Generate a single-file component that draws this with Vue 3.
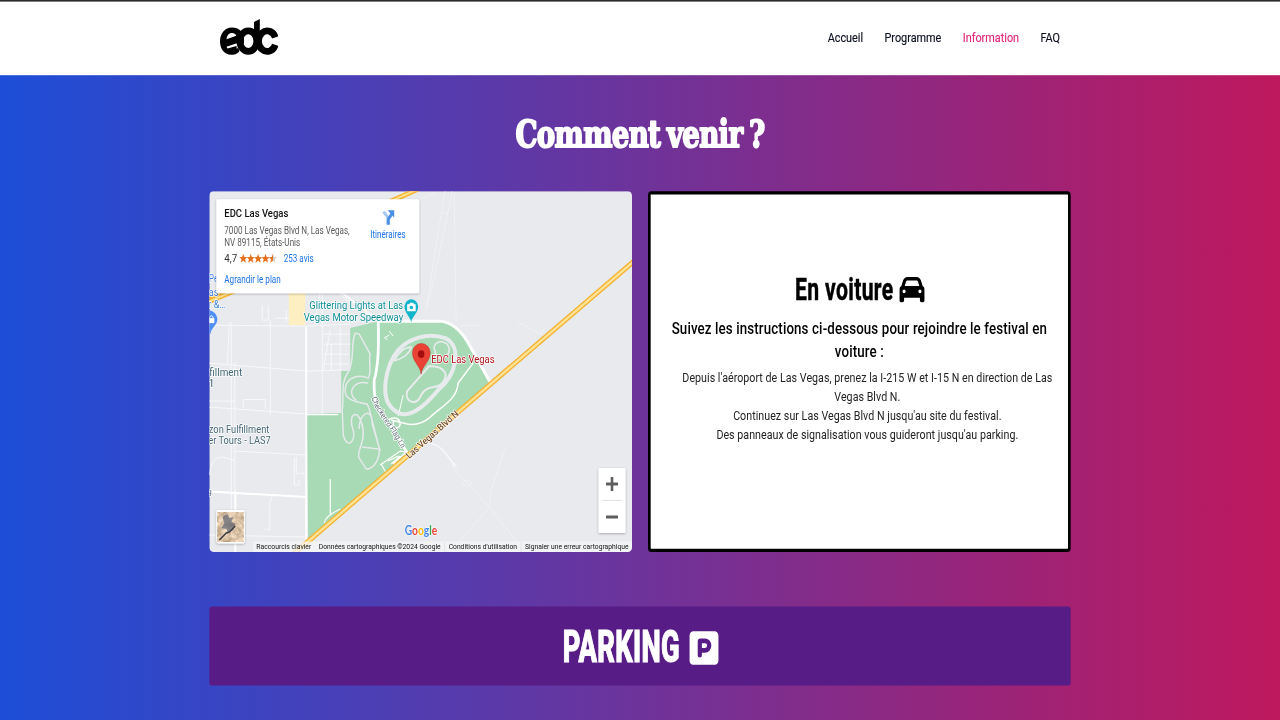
<script setup>
const links = [
  { label: 'Accueil' },
  { label: 'Programme' },
  { label: 'Information', active: true },
  { label: 'FAQ' },
]
const steps = [
  "Depuis l'aéroport de Las Vegas, prenez la I-215 W et I-15 N en direction de Las Vegas Blvd N.",
  "Continuez sur Las Vegas Blvd N jusqu'au site du festival.",
  "Des panneaux de signalisation vous guideront jusqu'au parking.",
]
const stars = [0, 1, 2, 3, 4].map((i) => 243 + i * 7.4)
const starShape = 'M0 -4.7L1.1 -1.5L4 -1.4L1.8 .7L2.6 4.100L0 2.2L-2.6 4.100L-1.8 .7L-4 -1.4L-1.1 -1.5Z'
</script>

<template>
  <div class="viewport">
    <div class="page">
      <header class="bar">
        <div class="bar-inner">
          <svg class="logo" viewBox="220 18 58 38" preserveAspectRatio="none" fill="none">
            <path d="M232 27C239 27 243 31 244 38V43L238 47L239.500 50.500C237 54 234 54.300 231 54.300C224 54 220 48 220 41C220 33 225 27 232 27Z" fill="#000" />
            <path d="M226.500 38.800C227 34 230 32.500 232 32.600C234.500 32.700 236 34.200 236.200 35.300Z" fill="#fff" />
            <path d="M226.500 46.300L237.500 42.600L238 47L236.800 48.500L236.500 45.500L227.500 48Z" fill="#fff" />
            <g stroke="#000" stroke-width="6.700">
              <ellipse cx="248.300" cy="40.700" rx="8.500" ry="10.300" />
              <path d="M275.300 37A8.700 10.300 0 1 0 275.300 44.500" />
            </g>
            <path d="M254 21.600L259.800 18.500V43H254Z" fill="#000" />
          </svg>
          <nav class="nav">
            <a v-for="l in links" :key="l.label" :class="{ active: l.active }">{{ l.label }}</a>
          </nav>
        </div>
      </header>

      <main class="content">
        <h1 class="title">
          <svg viewBox="0 0 260 50" preserveAspectRatio="none">
            <text x="5.500" y="37.500" textLength="249" lengthAdjust="spacingAndGlyphs">Comment venir ?</text>
          </svg>
        </h1>

        <section class="columns">
          <svg class="map" viewBox="209 191 423 361" preserveAspectRatio="none" fill="none">
            <defs>
              <filter id="soft" x="-20%" y="-20%" width="140%" height="150%">
                <feDropShadow dx="0" dy="0.800" stdDeviation="1" flood-opacity="0.300" />
              </filter>
              <filter id="thumb" x="0" y="0" width="100%" height="100%">
                <feTurbulence type="fractalNoise" baseFrequency="0.180" numOctaves="3" seed="8" />
                <feColorMatrix values="1.300 0 0 0 .08  1.200 0 0 0 .02  1.100 0 0 0 -.08  0 0 0 0 1" />
              </filter>
              <linearGradient id="half"><stop offset=".5" stop-color="#e7711b" /><stop offset=".5" stop-color="#cfcfcf" /></linearGradient>
            </defs>
            <rect x="209" y="191" width="423" height="361" fill="#e8eaed" />
            <rect x="288.500" y="285" width="16.500" height="40" fill="#feefc3" />
            <path d="M350 328L378 321H440C452 322 460 330 467 341L491 384L308 542L306.500 414L341 413V371H350Z" fill="#a8dab5" />

            <g stroke="#f7f8f9" stroke-width="1">
              <path d="M209 325L306 326M306 326L350 324M231 322V540M229 322L227 365M209 363L306 371L341 370M234.500 362V491M270 320V415M209 407L306 414M209 401H235M234 451L306 455M209 475Q211 456 222 457L234 460M209 491L306 497M272 496Q268 504 269.500 510V530L264 529M209 535L306 537M243 400V408M243 399.500H265V409M296 457V474L304 473M294 457V485H299V480" />
              <path d="M322 292V414M330 330L323 370M340 327V370M324 344H350M323 354H349M323 364H349M322 334H350M331 344V370M320 292L314 325M262 305V320H268V305M286 310V322M275 318H289M337 292L353 304" />
            </g>
            <g stroke="#f2f3f5" stroke-width=".8">
              <path d="M445 191C438 230 432 272 426 310M452 191C444 230 433 285 427 306M454 193L456 322M460 325.500H481M517 326L521 323L539 334L546 328M420 199L436 192M442 212L447 213" />
              <path d="M453 468L464 480L490 508L516 541M489 508L459 541M490 508V494L505 447" />
              <ellipse cx="467" cy="483" rx="4" ry="3" />
            </g>
            <path d="M430 443C440 445 445 452 454 465" stroke="#f9fafb" stroke-width="1.300" />
            <circle cx="454.500" cy="465.500" r="1.500" stroke="#f9fafb" />
            <g stroke="#fff" stroke-width="2">
              <path d="M306 326V552M209 491.500L306 497M235 491V552M341 292L354 302Q370 314 379 321" />
              <path d="M378 321C379 350 378 367 374 380C373 401 377 407 388 422Q399 437 407 453" stroke-width="2.800" />
              <path d="M378 321H440C452 322 460 330 467 341L491 384" stroke-width="3" />
              <path d="M473 363L458 383C457 399 442 406 430 417Q420 426 407 424L391 420M386 424C389 415 401 417 400 424C399 431 390 427 394 420" stroke-width="1.500" />
              <path d="M306 414.500H338M330 479V516M324 523Q325 516 340 509M380 465L400 451L406 452L393 464M381 464L386 473M388 461L398 456M391 464L400 456" stroke-width="1.200" />
              <path d="M385 337L387 340M384 338L389 335M389 331L393 336M403 395L398 416" stroke-width="1" />
            </g>
            <g stroke="#e6e9ec" stroke-width="1.500">
              <path d="M355 333C350 344 355 360 348 372C340 382 344 397 342 410L343 435C347 450 356 441 353 430C347 415 357 408 361 422C368 440 355 452 359 458L366 469C374 469 380 458 379 448L369 409L367 404C357 402 343 400 345 389C346 376 360 374 368 378C372 372 368 362 370 354L359 334ZM368 383C353 380 346 393 356 400M362 447L378 449M359 429C358 414 372 405 372 424L380 451" />
            </g>
            <g stroke="#e8ebed">
              <path d="M398 350C409 338 428 332 445 338C462 346 457 374 438 390C425 406 407 422 394 410C378 398 386 365 398 350Z" stroke-width="4" />
              <path d="M394 366C399 353 412 341 430 338" stroke="#a8dab5" stroke-width="1" />
              <path d="M407 391L429 366C438 366 451 370 443 382C437 391 427 382 420 397C416 406 404 402 407 391Z" stroke-width="2" />
              <path d="M435 351C431 345 439 338 447 344C452 351 447 359 439 358Q435 357 435 351M394 361Q401 347 411 347Q409 356 394 361" stroke-width="1.600" />
            </g>
            <path d="M634 261L512 365.500L306 543L293 554" stroke="#f5b12f" stroke-width="5" />
            <path d="M634 261L512 365.500L306 543L293 554" stroke="#fde293" stroke-width="2.500" />
            <path d="M386 203L420 188M205 303L238 289M209 298L228 290" stroke="#f9b632" stroke-width="5" />
            <path d="M386 203L420 188M205 303L238 289" stroke="#fde293" stroke-width="1.800" />

            <g class="halo" fill="#456775" font-size="11.300">
              <text x="209" y="375.500" textLength="33" lengthAdjust="spacingAndGlyphs">fillment</text>
              <text x="208" y="387">1</text>
              <text x="208.500" y="432.500" textLength="60.500" lengthAdjust="spacingAndGlyphs">zon Fulfillment</text>
              <text x="208" y="444" textLength="62.500" lengthAdjust="spacingAndGlyphs">er Tours - LAS7</text>
              <text x="207" y="494" font-size="8">g</text>
            </g>
            <g class="halo" fill="#3d7ee0" font-size="11">
              <text x="208.500" y="281.500" textLength="9.500" lengthAdjust="spacingAndGlyphs">Pe</text>
              <text x="208.500" y="296" textLength="9.500" lengthAdjust="spacingAndGlyphs">as</text>
              <text x="208" y="308" textLength="17" lengthAdjust="spacingAndGlyphs">r &amp;…</text>
            </g>
            <g class="halo" fill="#0d8f96" font-size="11.300">
              <text x="309" y="309.300" textLength="94" lengthAdjust="spacingAndGlyphs">Glittering Lights at Las</text>
              <text x="303.500" y="320.500" textLength="99.500" lengthAdjust="spacingAndGlyphs">Vegas Motor Speedway</text>
            </g>
            <path d="M209 310C214 311 217 315 217 319C217 325 211 327 210 334H209Z" fill="#4f8ff7" />
            <rect x="208" y="318" width="6" height="5" fill="#fff" /><path d="M209 318Q211 313 213 318" stroke="#fff" />
            <path d="M411 322C410 316 404.300 313 404.300 306A6.900 7.700 0 0 1 418 306C418 313 412 316 411 322Z" fill="#12b5cb" />
            <path d="M407 304H409L410 302.500H413L414 304H415.500V311H407Z" fill="#fff" /><circle cx="411.200" cy="307.300" r="1.800" fill="#12b5cb" />
            <path d="M421 374C420.500 366 412.300 362 412.300 352.500A8.700 9 0 0 1 430 352.500C430 362 421.500 366 421 374Z" fill="#ea4335" stroke="#c5221f" stroke-width=".5" />
            <ellipse cx="421" cy="354" rx="3.300" ry="3.900" fill="#a50e0e" />
            <text class="halo" x="431" y="362.900" fill="#b3131b" font-size="11.600" textLength="63.500" lengthAdjust="spacingAndGlyphs">EDC Las Vegas</text>
            <text class="halo" transform="translate(409 459) rotate(-41.500)" fill="#734b22" font-size="9.300" font-weight="500" textLength="67" lengthAdjust="spacingAndGlyphs">Las Vegas Blvd N</text>
            <path id="flag" d="M371 398C374 407 380 415 387 426Q396 438 402 450" />
            <text class="halo" fill="#5c6b73" font-size="8"><textPath href="#flag" textLength="59" lengthAdjust="spacingAndGlyphs">Checkered Flag Ln</textPath></text>

            <rect x="216" y="199" width="203" height="94" rx="1.500" fill="#fff" filter="url(#soft)" />
            <text x="224" y="217.300" fill="#111" font-size="11.600" font-weight="500" textLength="64" lengthAdjust="spacingAndGlyphs">EDC Las Vegas</text>
            <g fill="#5b5b5b" font-size="10.300">
              <text x="224" y="234.200" textLength="125.500" lengthAdjust="spacingAndGlyphs">7000 Las Vegas Blvd N, Las Vegas,</text>
              <text x="224" y="245.400" textLength="76" lengthAdjust="spacingAndGlyphs">NV 89115, États-Unis</text>
              <text x="224" y="262.300" font-size="11.300" textLength="13" lengthAdjust="spacingAndGlyphs" fill="#333">4,7</text>
            </g>
            <path v-for="(x, i) in stars" :key="x" :d="starShape" :transform="`translate(${x} 258.400)`" :fill="i === 4 ? 'url(#half)' : '#e7711b'" />
            <g fill="#1a73e8" font-size="10.300">
              <text x="283.500" y="262.300" textLength="30" lengthAdjust="spacingAndGlyphs">253 avis</text>
              <text x="224" y="282.500" textLength="56.500" lengthAdjust="spacingAndGlyphs">Agrandir le plan</text>
              <text x="370" y="237.500" textLength="35.500" lengthAdjust="spacingAndGlyphs">Itinéraires</text>
            </g>
            <path d="M383.300 211.500L388 217.500V224" stroke="#a6c8f8" stroke-width="3" />
            <path d="M388 224.500V219L392 213.500" stroke="#4a8fe6" stroke-width="3" /><path d="M387.500 210H394V217.500Z" fill="#4a8fe6" />

            <rect x="598.500" y="468" width="27" height="65" rx="1" fill="#fff" filter="url(#soft)" />
            <path d="M602 500.500H622" stroke="#e3e3e3" />
            <path d="M606 484H618M606 517H618" stroke="#5f5f5f" stroke-width="3" /><path d="M612 477V491" stroke="#5f5f5f" stroke-width="2.600" />
            <rect x="216" y="510" width="28.500" height="33.500" rx="2" fill="#fff" filter="url(#soft)" />
            <rect x="217.500" y="512" width="25.500" height="29.500" filter="url(#thumb)" />
            <rect x="217.500" y="512" width="25.500" height="29.500" fill="#d6b08d" opacity=".35" />
            <path d="M222 517L227 514L229 518L233 517L231 522L235 524L233 530L228 533L226 529L221 528L224 523Z" fill="#5f6675" opacity=".7" />
            <path d="M219 540L226 533L229 532L235 526" stroke="#3d3d42" stroke-width="1.500" />

            <text class="google" x="404.500" y="534.700" textLength="32.500" lengthAdjust="spacingAndGlyphs"><tspan fill="#4285f4">G</tspan><tspan fill="#ea4335">o</tspan><tspan fill="#fbbc04">o</tspan><tspan fill="#4285f4">g</tspan><tspan fill="#34a853">l</tspan><tspan fill="#ea4335">e</tspan></text>
            <rect x="253" y="541.500" width="379" height="10.500" fill="#f5f5f5" opacity=".75" />
            <g fill="#111" font-size="7.900">
              <text x="256" y="549.200" textLength="55" lengthAdjust="spacingAndGlyphs">Raccourcis clavier</text>
              <text x="318.500" y="549.200" textLength="122" lengthAdjust="spacingAndGlyphs">Données cartographiques ©2024 Google</text>
              <text x="448.500" y="549.200" textLength="68.500" lengthAdjust="spacingAndGlyphs">Conditions d'utilisation</text>
              <text x="525" y="549.200" textLength="103.500" lengthAdjust="spacingAndGlyphs">Signaler une erreur cartographique</text>
            </g>
            <path d="M444.500 542V552M521 542V552" stroke="#e4e4e4" />
          </svg>

          <article class="card">
            <h2 class="card-title">
              <svg class="head" viewBox="0 0 100 36" preserveAspectRatio="none">
                <text x="1" y="29" textLength="98.500" lengthAdjust="spacingAndGlyphs">En voiture</text>
              </svg>
              <svg class="car" viewBox="0 0 512 512" preserveAspectRatio="none" fill="#000">
                <path fill-rule="evenodd" d="M135 117L109 192H403L377 117C373 104 360 96 347 96H165C152 96 139 104 135 117ZM39 197L75 96C88 58 124 32 165 32H347C388 32 424 58 437 96L473 197C496 206 512 229 512 256V448A32 32 0 0 1 480 480H448A32 32 0 0 1 416 448V400H96V448A32 32 0 0 1 64 480H32A32 32 0 0 1 0 448V256C0 229 16 206 39 197ZM128 288A32 32 0 1 0 64 288A32 32 0 1 0 128 288ZM416 320A32 32 0 1 0 416 256A32 32 0 1 0 416 320Z" />
              </svg>
            </h2>
            <h3>Suivez les instructions ci-dessous pour rejoindre le festival en voiture :</h3>
            <ul>
              <li v-for="s in steps" :key="s">{{ s }}</li>
            </ul>
          </article>
        </section>

        <section class="parking">
          <svg class="park-text" viewBox="0 0 120 50" preserveAspectRatio="none">
            <text x="1.500" y="41" textLength="117" lengthAdjust="spacingAndGlyphs">PARKING</text>
          </svg>
          <svg class="park-icon" viewBox="0 0 448 512" preserveAspectRatio="none" fill="#fff">
            <path fill-rule="evenodd" d="M64 32C29 32 0 61 0 96V416C0 451 29 480 64 480H384C419 480 448 451 448 416V96C448 61 419 32 384 32ZM192 256H240A32 32 0 0 0 240 192H192ZM240 320H192V352A32 32 0 0 1 128 352V168A40 40 0 0 1 168 128H240A96 96 0 0 1 240 320Z" />
          </svg>
        </section>
      </main>
    </div>
  </div>
</template>

<style>
body { margin: 0; overflow: hidden; }
</style>

<style scoped>
* { box-sizing: border-box; }
.viewport { width: 1280px; height: 720px; overflow: hidden; }
.page {
  width: 1920px;
  height: 900px;
  transform: scale(0.66667, 0.8);
  transform-origin: 0 0;
  font-family: Roboto, "Liberation Sans", sans-serif;
  background: linear-gradient(to right, #1d4ed8, #be185d);
}
.bar { height: 94px; background: #fff; border-top: 2px solid #2b2a2d; }
.bar-inner { width: 1260px; height: 90px; margin: 0 auto; display: flex; align-items: center; justify-content: space-between; }
.logo { width: 87px; height: 47.500px; }
.nav { display: flex; gap: 32px; font-size: 16.300px; line-height: 24px; color: #0b0f1f; padding-top: 1px; -webkit-text-stroke: 0.200px currentColor; }
.nav .active { color: #e0287c; }
.content { width: 1292px; margin: 0 auto; }
.title { margin: 0; height: 145px; padding-top: 43px; display: flex; justify-content: center; }
.title svg { width: 390px; height: 62.500px; overflow: visible; }
.title text { font: 700 38px "DejaVu Serif", serif; word-spacing: -3px; letter-spacing: -1px; fill: #fff; stroke: #fff; stroke-width: 2.100; stroke-linejoin: round; }
.columns { display: grid; grid-template-columns: 1fr 1fr; gap: 24px; height: 451px; }
.map { width: 100%; height: 451px; border-radius: 6px; display: block; overflow: hidden; }
.halo { paint-order: stroke; stroke: #fff; stroke-width: 1.500; stroke-linejoin: round; }
.google { font: 700 13.500px Lato, sans-serif; stroke: #fff; stroke-width: 1; paint-order: stroke; }
.card { background: #fff; border: 4px solid #000; border-radius: 5px; display: flex; flex-direction: column; align-items: center; padding: 93px 20px 0; text-align: center; color: #000; }
.card-title { margin: 0; display: flex; align-items: center; gap: 8px; height: 50px; }
.head { width: 150px; height: 45px; overflow: visible; }
.head text { font: 700 31.500px Roboto, sans-serif; letter-spacing: 0.500px; stroke: #000; stroke-width: 0.500; }
.car { width: 38px; height: 36px; margin-top: 2px; }
h3 { margin: 11px 0 0; font-size: 20px; line-height: 28px; font-weight: 500; letter-spacing: 0.180px; }
ul { margin: 7px 0 0; padding: 0 0 0 24px; list-style: none; font-size: 16px; line-height: 24px; color: #222; font-weight: 400; letter-spacing: 0.050px; }
.parking { margin-top: 68px; height: 99px; border-radius: 4px; background: #581c87; display: flex; align-items: center; justify-content: center; gap: 12px; }
.park-text { width: 180px; height: 62.500px; overflow: visible; }
.park-text text { font: 800 43.500px Roboto, sans-serif; letter-spacing: 0.500px; fill: #fff; stroke: #fff; stroke-width: 1.200; }
.park-icon { width: 44px; height: 48px; margin-top: 4px; }
</style>
